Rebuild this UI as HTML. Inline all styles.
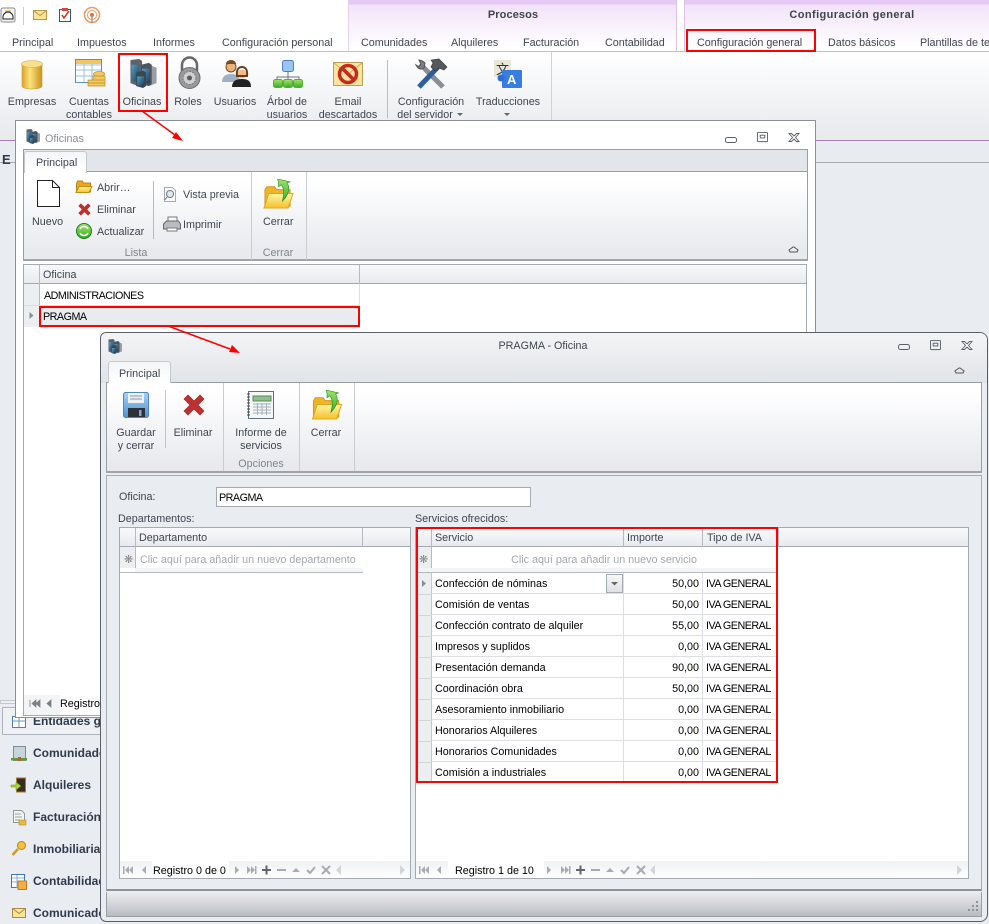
<!DOCTYPE html>
<html lang="es"><head><meta charset="utf-8"><title>Oficinas</title>
<style>
html,body{margin:0;padding:0}
body{width:989px;height:924px;position:relative;overflow:hidden;background:#e9ecf1;font:10.75px/14px "Liberation Sans",sans-serif;color:#3f4550}
div{position:absolute;box-sizing:border-box}
.t{position:absolute;white-space:nowrap;margin-top:1px}
.c{position:absolute;white-space:nowrap;transform:translateX(-50%);margin-top:1px}
.k{color:#000}
.g{color:#a3a7ad}
.n{font-weight:bold;font-size:12px;color:#2f3b4e;left:33px;margin-top:0}
.r{text-align:right;width:60px}
.u{letter-spacing:-.5px}
svg{position:absolute;left:0;top:0;overflow:visible}
.row{left:432px;width:345px;height:21px;border-bottom:1px solid #dcdfe3}
</style></head><body>
<svg width="0" height="0"><defs>
<linearGradient id="gold" x1="0" x2="1" y1="0" y2="0"><stop offset="0" stop-color="#dba528"/><stop offset=".4" stop-color="#fbe27e"/><stop offset="1" stop-color="#c9921a"/></linearGradient>
<linearGradient id="fold" x1="0" x2="0" y1="0" y2="1"><stop offset="0" stop-color="#fff6a8"/><stop offset="1" stop-color="#f7bf28"/></linearGradient>
<linearGradient id="blu" x1="0" x2="0" y1="0" y2="1"><stop offset="0" stop-color="#a6d0f4"/><stop offset="1" stop-color="#4f93d0"/></linearGradient>
<linearGradient id="srv" x1="0" x2="1" y1="0" y2="1"><stop offset="0" stop-color="#58a0c8"/><stop offset="1" stop-color="#1d3a55"/></linearGradient>
<linearGradient id="grn" x1="0" x2="0" y1="0" y2="1"><stop offset="0" stop-color="#9fe465"/><stop offset="1" stop-color="#3aaa2a"/></linearGradient>
<symbol id="server" viewBox="0 0 30 30">
<path d="M20 6l8 3v16l-8 3z" fill="#9a9ea3"/>
<path d="M1 1l9-1 3 2v24l-4 2-8-3z" fill="#5b636b"/><path d="M2 6h8v18l-8-2z" fill="url(#srv)"/>
<path d="M12 6l8-2 3 2v20l-3 2-8-2z" fill="#4d555d"/><path d="M13 10h8v15h-8z" fill="url(#srv)"/>
<path d="M7 14l7-2 3 2v14l-3 2-7-2z" fill="#3d454d"/><path d="M8 18h7v10l-7-1z" fill="url(#srv)"/>
</symbol>
<symbol id="folder" viewBox="0 0 32 32">
<path d="M2 28V11l2-3h8l2 3h14v17z" fill="#f0b428" stroke="#d09a18"/>
<path d="M1 30l5-15h25l-5 15z" fill="url(#fold)" stroke="#e0a518"/>
<path d="M16 3l-1-3 13 3-3 1c3 5 2 12-5 19 2-7 2-13-1-17l-3 2z" fill="url(#grn)" stroke="#1e8a1e" stroke-width=".6"/>
</symbol>
<symbol id="redx" viewBox="0 0 22 22">
<path d="M1 5l4-4 6 6 6-6 4 4-6 6 6 6-4 4-6-6-6 6-4-4 6-6z" fill="#c03030" stroke="#9a2a2a" stroke-width=".7"/>
</symbol>
<symbol id="dash" viewBox="0 0 12 12"><rect x=".5" y="3.500" width="11" height="5" rx="2" fill="none" stroke="#5a6068"/></symbol>
<symbol id="maxb" viewBox="0 0 12 12"><rect x=".5" y=".5" width="11" height="10" rx="1" fill="none" stroke="#5a6068"/><rect x="3.500" y="3.500" width="5" height="3" fill="none" stroke="#5a6068"/></symbol>
<symbol id="closeb" viewBox="0 0 12 12"><path d="M1 1.500h2.500L6 4l2.500-2.500H11L7.500 5.500 11 9.500H8.500L6 7l-2.500 2.500H1l3.500-4z" fill="#fff" stroke="#5a6068" stroke-width=".9"/></symbol>
</defs></svg>

<!-- APP BACKGROUND -->
<div style="left:0;top:0;width:989px;height:52px;background:#fff"></div>
<div style="left:348px;top:0;width:329px;height:52px;background:linear-gradient(#e5c9f2 0,#e5c9f2 4px,#f2e3f8 5px,#fff 48px);border-left:1px solid #e3d2ec;border-right:1px solid #dcc4e8"></div>
<div style="left:684px;top:0;width:305px;height:52px;background:linear-gradient(#e5c9f2 0,#e5c9f2 4px,#f2e3f8 5px,#fff 48px);border-left:1px solid #dcc4e8"></div>
<div style="left:0;top:51px;width:989px;height:1px;background:#cdb8da"></div>
<div style="left:0;top:52px;width:989px;height:88px;background:linear-gradient(#fff,#e7e9ed)"></div>
<div style="left:0;top:52px;width:552px;height:70px;border-right:1px solid #d0d3d8"></div>
<div style="left:387px;top:60px;width:1px;height:58px;background:#b9bcc2"></div>
<div style="left:0;top:140px;width:989px;height:1px;background:#a780ba"></div>
<div style="left:0;top:141px;width:989px;height:22px;background:#e8ebef;border-bottom:1px solid #a6a9ae"></div>

<span class="t" style="left:12px;top:35px">Principal</span>
<span class="t" style="left:77px;top:35px">Impuestos</span>
<span class="t" style="left:153px;top:35px">Informes</span>
<span class="t" style="left:222px;top:35px">Configuración personal</span>
<span class="t" style="left:361px;top:35px">Comunidades</span>
<span class="t" style="left:451px;top:35px">Alquileres</span>
<span class="t" style="left:523px;top:35px">Facturación</span>
<span class="t" style="left:605px;top:35px">Contabilidad</span>
<span class="t" style="left:697px;top:35px">Configuración general</span>
<span class="t" style="left:828px;top:35px">Datos básicos</span>
<span class="t" style="left:920px;top:35px">Plantillas de te</span>
<span class="c" style="left:513px;top:7px;font-weight:bold;font-size:11px;letter-spacing:.1px">Procesos</span>
<span class="c" style="left:852px;top:7px;font-weight:bold;font-size:11px;letter-spacing:.4px">Configuración general</span>

<span class="c" style="left:32px;top:94px">Empresas</span>
<span class="c" style="left:89px;top:94px">Cuentas</span><span class="c" style="left:89px;top:107px">contables</span>
<span class="c" style="left:142px;top:94px">Oficinas</span>
<span class="c" style="left:188px;top:94px">Roles</span>
<span class="c" style="left:235px;top:94px">Usuarios</span>
<span class="c" style="left:287px;top:94px">Árbol de</span><span class="c" style="left:287px;top:107px">usuarios</span>
<span class="c" style="left:348px;top:94px">Email</span><span class="c" style="left:348px;top:107px">descartados</span>
<span class="c" style="left:431px;top:94px">Configuración</span><span class="c" style="left:425px;top:107px">del servidor</span>
<span class="c" style="left:508px;top:94px">Traducciones</span>
<span class="t" style="left:2px;top:152px;font-weight:bold;font-size:13px;color:#2f3b4e">E</span>

<svg width="989" height="924">
<!-- quick access -->
<rect x="1" y="8" width="14" height="14" rx="2" fill="#f4f4f4" stroke="#8a8a8a"/><path d="M3 17a5 5 0 0 1 10 0v2H3z" fill="#fff" stroke="#222"/><path d="M5 11h6" stroke="#c9a030"/>
<path d="M23.500 7v18" stroke="#c9ccd1"/>
<rect x="33.500" y="10.500" width="13" height="9" fill="#fbe49a" stroke="#b9983f"/><path d="M33.500 10.500l6.500 5 6.500-5" fill="none" stroke="#b9983f"/>
<rect x="59.500" y="9.500" width="11" height="12" fill="#fff" stroke="#39527d"/><rect x="62" y="8" width="6" height="3" fill="#c94a3a"/><path d="M62 15l2 3 5-7" fill="none" stroke="#c93a30" stroke-width="1.600"/>
<circle cx="92" cy="15" r="7.500" fill="none" stroke="#ef9a62" stroke-width="1.500"/><circle cx="92" cy="15" r="4.500" fill="none" stroke="#ef9a62"/><circle cx="92" cy="15" r="2" fill="#e0662a"/><path d="M92 15v8" stroke="#9a9a9a" stroke-width="1.500"/>
<!-- Empresas -->
<path d="M22 64v22c0 4 20 4 20 0V64z" fill="url(#gold)" stroke="#c99a30" stroke-width=".6"/><ellipse cx="32" cy="64" rx="10.500" ry="3.500" fill="#f8e08a" stroke="#d0a848" stroke-width=".6"/>
<!-- Cuentas -->
<rect x="75.500" y="59.500" width="26" height="23" fill="#fff" stroke="#5a8fc5"/><rect x="76" y="60" width="25" height="4" fill="#f2c660"/>
<path d="M76 70h25M76 76h25M84 64v18M92 64v18M76 65h25" stroke="#9ac0e4"/>
<g fill="#f3c85c" stroke="#b98f28" stroke-width=".7"><ellipse cx="99" cy="74" rx="5.500" ry="2.500"/><path d="M88 80h17v3H88zM88 83h17v3H88zM93 76h12v4H93z"/></g>
<use href="#server" x="129" y="59" width="30" height="29"/>
<!-- Roles -->
<path d="M182 71v-6a7.500 7.500 0 0 1 15 0v6" fill="none" stroke="#66686c" stroke-width="2.500"/>
<circle cx="189.500" cy="78" r="10.500" fill="#9a9a9c" stroke="#6c6c70"/><circle cx="189.500" cy="78" r="6.500" fill="#cfcfd1" stroke="#77777a" stroke-dasharray="2 1"/><circle cx="189.500" cy="78" r="2.500" fill="#5c5c60"/>
<!-- Usuarios -->
<circle cx="231" cy="67" r="5" fill="#eab37a" stroke="#7a4a20"/><path d="M222 82c0-6 4-8 9-8s9 2 9 8z" fill="#9fb0c6"/>
<path d="M226 64a5 4 0 0 1 10 0z" fill="#7a4a20"/>
<circle cx="242" cy="74" r="4.500" fill="#f0bd8a"/><path d="M237 76c-1-8 3-9 5-9s6 1 5 9z" fill="none" stroke="#6e3c14" stroke-width="2"/><path d="M232 87c0-6 4-8 10-8s9 2 9 8z" fill="#222"/>
<!-- Arbol -->
<rect x="282.500" y="60.500" width="11" height="11" rx="2" fill="#9cc4f2" stroke="#4f7fc0"/>
<path d="M288 72v5M277 80v-3h22v3M288 77v3" fill="none" stroke="#6a7684"/>
<g fill="url(#grn)" stroke="#5aaa34"><rect x="273.500" y="79.500" width="9" height="8" rx="2"/><rect x="283.500" y="79.500" width="9" height="8" rx="2"/><rect x="293.500" y="79.500" width="9" height="8" rx="2"/></g>
<!-- Email -->
<rect x="333.500" y="62.500" width="29" height="23" fill="#fbe59c" stroke="#b9a156"/><path d="M333.500 62.500l14.500 12 14.500-12" fill="none" stroke="#c9ac5a"/>
<circle cx="348" cy="74" r="8.500" fill="none" stroke="#c42a20" stroke-width="3.500"/><path d="M342 68l12 12" stroke="#c42a20" stroke-width="3.500"/>
<!-- Config -->
<path d="M420 64l23 23" stroke="#8a8e94" stroke-width="5"/><path d="M416 65c2 4 5 5 8 3l1-5c-2-2-5-3-6-3l2 4-2 3z" fill="#7c8086" stroke="#555"/>
<path d="M419 87l19-20" stroke="#2f5e9c" stroke-width="5"/><path d="M431 60l8-1 8 8-3 3-5-2-4 3-4-4 2-4z" fill="#55585d" stroke="#333" stroke-width=".6"/>
<!-- Traducciones -->
<rect x="494" y="60" width="17" height="17" fill="#e9e6da"/><text x="496" y="74" font-family="'Noto Sans CJK SC',sans-serif" font-size="13" fill="#333">文</text>
<rect x="502" y="70" width="20" height="18" rx="1" fill="#3a7de0"/><text x="507" y="84" font-family="'Liberation Sans',sans-serif" font-weight="bold" font-size="13" fill="#fff">A</text><circle cx="501" cy="78" r="3.500" fill="#2a6fd8"/>
<path d="M457 113h6l-3 3zM504 113h6l-3 3z" fill="#666"/>
</svg>

<!-- LEFT NAV -->
<div style="left:0;top:700px;width:100px;height:4px;border:1px solid #c5c9cf;background:#eef0f3"></div>
<div style="left:2px;top:707px;width:110px;height:28px;border:1px solid #aeb4bd;background:#eef0f3"></div>
<span class="t n" style="top:714px">Entidades g</span>
<span class="t n" style="top:746px">Comunidades</span>
<span class="t n" style="top:778px">Alquileres</span>
<span class="t n" style="top:810px">Facturación</span>
<span class="t n" style="top:842px">Inmobiliaria</span>
<span class="t n" style="top:874px">Contabilidad</span>
<span class="t n" style="top:906px">Comunicados</span>
<svg width="989" height="924">
<rect x="12.500" y="716.500" width="13" height="11" fill="#fff" stroke="#4f7fc0"/><path d="M13 721h12M19 717v10" stroke="#6a9ad0"/>
<rect x="13.500" y="746.500" width="12" height="14" fill="#c8d4dc" stroke="#7d8d99"/><rect x="11" y="758" width="16" height="2.500" fill="#5d9a3a"/><rect x="18" y="757" width="3" height="4" fill="#a86a2a"/>
<rect x="16.500" y="778" width="9" height="14" fill="#3a2c1c" stroke="#a8793c"/><path d="M11 785h5v-3l5 4-5 4v-3h-5z" fill="#a9d632" stroke="#6a8a14" stroke-width=".5"/>
<path d="M13.500 810.500h8l3 3v9h-11z" fill="#f2f4ee" stroke="#8d9a9a"/><path d="M15 814h6M15 817h7M15 820h5" stroke="#9aa5a5"/><rect x="19" y="820" width="7" height="5" fill="#e8b840" stroke="#a8802a" stroke-width=".5"/>
<circle cx="21.500" cy="845.500" r="4" fill="#f5c33c" stroke="#b8841a"/><path d="M18 849l-5.500 6" stroke="#d9981c" stroke-width="2.500"/>
<rect x="11.500" y="874.500" width="13" height="13" fill="#fff" stroke="#3f78c0"/><path d="M12 878h12M12 882h12M17 875v13" stroke="#8ab0dc"/><rect x="18" y="881" width="8.500" height="8.500" fill="#f2b040" stroke="#c07a20"/>
<rect x="12.500" y="908.500" width="13" height="9" fill="#fbe49a" stroke="#a88d3f"/><path d="M12.500 908.500l6.500 5 6.500-5" fill="none" stroke="#a88d3f"/>
</svg>

<!-- WINDOW 1 -->
<div style="left:15px;top:120px;width:801px;height:598px;background:#fff;border:1px solid #8b9098"></div>
<div style="left:23px;top:149px;width:785px;height:23px;background:#e2e5e9;border:1px solid #9a9ea5;border-bottom:0"></div>
<div style="left:23px;top:171px;width:785px;height:90px;background:linear-gradient(#fff 10%,#e8eaee 90%);border:1px solid #9a9ea5;border-bottom:2px solid #a0a4aa"></div>
<div style="left:24px;top:151px;width:63px;height:22px;background:linear-gradient(#f4f5f7,#fff);border:1px solid #c4c8ce;border-bottom:0;border-radius:3px 3px 0 0"></div>
<div style="left:251px;top:172px;width:1px;height:88px;background:#c9ccd1"></div>
<div style="left:306px;top:172px;width:1px;height:88px;background:#c9ccd1"></div>
<div style="left:153px;top:181px;width:1px;height:58px;background:#b7bac0"></div>
<span class="t" style="left:45px;top:131px;color:#8a8e94">Oficinas</span>
<span class="t" style="left:36px;top:155px">Principal</span>
<span class="t" style="left:32px;top:214px">Nuevo</span>
<span class="t" style="left:97px;top:180px">Abrir…</span>
<span class="t" style="left:97px;top:202px">Eliminar</span>
<span class="t" style="left:97px;top:224px">Actualizar</span>
<span class="t" style="left:183px;top:187px">Vista previa</span>
<span class="t" style="left:183px;top:217px">Imprimir</span>
<span class="t" style="left:263px;top:214px">Cerrar</span>
<span class="c g" style="left:136px;top:245px;color:#7f868f">Lista</span>
<span class="c g" style="left:278px;top:245px;color:#7f868f">Cerrar</span>
<!-- grid 1 -->
<div style="left:23px;top:264px;width:784px;height:452px;background:#fff;border:1px solid #a4a9b2"></div>
<div style="left:24px;top:265px;width:782px;height:19px;background:linear-gradient(#f8f9fa,#e8eaee);border-bottom:1px solid #a4a9b2"></div>
<div style="left:39px;top:265px;width:1px;height:62px;background:#b5b9c0"></div>
<div style="left:359px;top:265px;width:1px;height:19px;background:#b5b9c0"></div>
<div style="left:24px;top:284px;width:15px;height:43px;background:#eceef1"></div>
<div style="left:24px;top:305px;width:336px;height:1px;background:#d9dce0"></div>
<div style="left:40px;top:306px;width:320px;height:21px;background:#e9ebee"></div>
<div style="left:359px;top:284px;width:1px;height:43px;background:#dcdfe3"></div>
<span class="t" style="left:43px;top:267px">Oficina</span>
<span class="t k u" style="left:44px;top:288px">ADMINISTRACIONES</span>
<span class="t k u" style="left:43px;top:309px">PRAGMA</span>
<div style="left:24px;top:695px;width:36px;height:20px;background:#f3f4f6"></div>
<span class="t k" style="left:60px;top:696px">Registro</span>
<svg width="989" height="924">
<use href="#server" x="26" y="129" width="15" height="15"/>
<use href="#dash" x="725" y="134" width="12" height="12"/><use href="#maxb" x="757" y="132" width="11" height="11"/><use href="#closeb" x="788" y="132" width="12" height="12"/>
<path d="M790 252l-1-2 4-3 1 0 4 3-1 2h-7z" fill="none" stroke="#555"/>
<path d="M37.500 180.500h15l7 7v19h-22z" fill="#fff" stroke="#222"/><path d="M52.500 180.500v7h7" fill="none" stroke="#222"/>
<path d="M76.500 192v-8l1-3h5l1 2h7v9z" fill="#e8a91c" stroke="#b9861a"/><path d="M76 192.500l3-6h13l-3 6z" fill="url(#fold)" stroke="#c88c10"/>
<use href="#redx" x="78" y="203" width="13" height="13"/>
<circle cx="84" cy="231" r="7.500" fill="url(#grn)" stroke="#1d7d1d"/><path d="M80 229a4.500 4.500 0 0 1 8 0M88 233a4.500 4.500 0 0 1-8 0" fill="none" stroke="#fff" stroke-width="1.500"/>
<path d="M164.500 187.500h8l3 3v11h-11z" fill="#fafafa" stroke="#a8acb2"/><circle cx="170" cy="194" r="3.500" fill="#dfe9f2" stroke="#6a7a8a"/><path d="M167 197l-2.500 3" stroke="#6a7a8a"/>
<path d="M168 217h9v5h-9z" fill="#f8f8f8" stroke="#777"/><path d="M163.500 224l3-3h12l2 3v5h-17z" fill="#b8bcc2" stroke="#666"/><path d="M167 228h10v3h-10z" fill="#fff" stroke="#777"/>
<use href="#folder" x="263" y="179" width="31" height="31"/>
<path d="M29.500 312v7l4-3.500z" fill="#8a8e94"/>
<path d="M30 700v7M36 700v7l-4-3.500zM40 700v7l-4-3.500zM51 700v7l-4-3.500z" fill="#7c8086" stroke="#7c8086" stroke-width=".8"/>
</svg>

<!-- WINDOW 2 -->
<div style="left:100px;top:332px;width:888px;height:590px;background:#e9ecf1;border:1px solid #5c6066;border-radius:6px 8px 8px 6px;overflow:hidden">
 <div style="left:0;top:0;width:886px;height:50px;background:linear-gradient(#f3f4f6,#e1e4e8)"></div>
</div>
<div style="left:106px;top:382px;width:876px;height:90px;background:linear-gradient(#fff 10%,#e8eaee 90%);border-top:1px solid #9a9ea5;border-left:1px solid #9a9ea5;border-right:1px solid #9a9ea5"></div>
<div style="left:108px;top:361px;width:63px;height:22px;background:linear-gradient(#f4f5f7,#fff);border:1px solid #c4c8ce;border-bottom:0;border-radius:3px 3px 0 0"></div>
<div style="left:106px;top:471px;width:876px;height:2px;background:#a0a4aa"></div>
<div style="left:106px;top:475px;width:876px;height:416px;border:1px solid #a8acb3;border-bottom:2px solid #8f9399;background:#e9ecf1"></div>
<div style="left:223px;top:383px;width:1px;height:88px;background:#c9ccd1"></div>
<div style="left:299px;top:383px;width:1px;height:88px;background:#c9ccd1"></div>
<div style="left:354px;top:383px;width:1px;height:88px;background:#c9ccd1"></div>
<div style="left:165px;top:390px;width:1px;height:58px;background:#c1c4ca"></div>
<div style="left:106px;top:892px;width:876px;height:25px;background:linear-gradient(#eceef1,#b9bcc1);border:1px solid #9a9ea5;border-top:0"></div>

<span class="c" style="left:543px;top:338px">PRAGMA - Oficina</span>
<span class="t" style="left:119px;top:366px">Principal</span>
<span class="c" style="left:136px;top:425px">Guardar</span><span class="c" style="left:136px;top:438px">y cerrar</span>
<span class="c" style="left:193px;top:425px">Eliminar</span>
<span class="c" style="left:261px;top:425px">Informe de</span><span class="c" style="left:261px;top:438px">servicios</span>
<span class="c" style="left:326px;top:425px">Cerrar</span>
<span class="c" style="left:261px;top:456px;color:#7f868f">Opciones</span>

<span class="t" style="left:119px;top:489px">Oficina:</span>
<div style="left:216px;top:487px;width:315px;height:20px;background:#fff;border:1px solid #a4a9b2"></div>
<span class="t k u" style="left:219px;top:490px">PRAGMA</span>
<span class="t" style="left:118px;top:511px">Departamentos:</span>
<span class="t" style="left:415px;top:511px">Servicios ofrecidos:</span>

<!-- left grid -->
<div style="left:119px;top:527px;width:292px;height:352px;background:#fff;border:1px solid #a4a9b2"></div>
<div style="left:120px;top:528px;width:290px;height:19px;background:linear-gradient(#f8f9fa,#e8eaee);border-bottom:1px solid #a4a9b2"></div>
<div style="left:135px;top:528px;width:1px;height:40px;background:#b5b9c0"></div>
<div style="left:362px;top:528px;width:1px;height:19px;background:#b5b9c0"></div>
<div style="left:120px;top:547px;width:15px;height:21px;background:#eceef1"></div>
<div style="left:120px;top:572px;width:243px;height:1px;background:#b5b9c0"></div>
<div style="left:135px;top:568px;width:228px;height:4px;background:#f3f4f6"></div>
<span class="t" style="left:139px;top:530px">Departamento</span>
<span class="t g" style="left:140px;top:552px">Clic aquí para añadir un nuevo departamento</span>
<div style="left:120px;top:861px;width:290px;height:17px;background:linear-gradient(#eef0f2,#fff)"></div>
<div style="left:152px;top:861px;width:77px;height:17px;background:#fff"></div>
<span class="t k" style="left:153px;top:863px">Registro 0 de 0</span>

<!-- right grid -->
<div style="left:415px;top:527px;width:554px;height:352px;background:#fff;border:1px solid #a4a9b2"></div>
<div style="left:416px;top:528px;width:552px;height:19px;background:linear-gradient(#f8f9fa,#e8eaee);border-bottom:1px solid #a4a9b2"></div>
<div style="left:431px;top:528px;width:1px;height:20px;background:#b5b9c0"></div>
<div style="left:623px;top:528px;width:1px;height:19px;background:#b5b9c0"></div>
<div style="left:702px;top:528px;width:1px;height:19px;background:#b5b9c0"></div>
<div style="left:778px;top:528px;width:1px;height:19px;background:#b5b9c0"></div>
<div style="left:416px;top:547px;width:16px;height:21px;background:#eceef1;border-right:1px solid #b5b9c0"></div>
<div style="left:416px;top:568px;width:362px;height:4px;background:#f3f4f6"></div>
<div style="left:416px;top:572px;width:362px;height:1px;background:#b5b9c0"></div>
<div style="left:416px;top:573px;width:16px;height:210px;background:#eceef1;border-right:1px solid #c5c9cf"></div>
<span class="t" style="left:435px;top:530px">Servicio</span>
<span class="t" style="left:627px;top:530px">Importe</span>
<span class="t" style="left:707px;top:530px">Tipo de IVA</span>
<span class="c g" style="left:604px;top:552px">Clic aquí para añadir un nuevo servicio</span>

<div class="row" style="top:573px"></div><div class="row" style="top:594px"></div><div class="row" style="top:615px"></div><div class="row" style="top:636px"></div><div class="row" style="top:657px"></div><div class="row" style="top:678px"></div><div class="row" style="top:699px"></div><div class="row" style="top:720px"></div><div class="row" style="top:741px"></div>
<div style="left:416px;top:594px;width:16px;height:1px;background:#d3d6db;box-shadow:0 21px #d3d6db,0 42px #d3d6db,0 63px #d3d6db,0 84px #d3d6db,0 105px #d3d6db,0 126px #d3d6db,0 147px #d3d6db,0 168px #d3d6db"></div>
<div style="left:623px;top:573px;width:1px;height:210px;background:#dcdfe3"></div>
<div style="left:702px;top:573px;width:1px;height:210px;background:#dcdfe3"></div>
<div style="left:606px;top:574px;width:17px;height:19px;background:linear-gradient(#f6f7f8,#dfe2e6);border:1px solid #a4a9b2"></div>

<span class="t k" style="left:435px;top:576px">Confección de nóminas</span><span class="t k r" style="left:639px;top:576px">50,00</span><span class="t k u" style="left:706px;top:576px">IVA GENERAL</span>
<span class="t k" style="left:435px;top:597px">Comisión de ventas</span><span class="t k r" style="left:639px;top:597px">50,00</span><span class="t k u" style="left:706px;top:597px">IVA GENERAL</span>
<span class="t k" style="left:435px;top:618px">Confección contrato de alquiler</span><span class="t k r" style="left:639px;top:618px">55,00</span><span class="t k u" style="left:706px;top:618px">IVA GENERAL</span>
<span class="t k" style="left:435px;top:639px">Impresos y suplidos</span><span class="t k r" style="left:639px;top:639px">0,00</span><span class="t k u" style="left:706px;top:639px">IVA GENERAL</span>
<span class="t k" style="left:435px;top:660px">Presentación demanda</span><span class="t k r" style="left:639px;top:660px">90,00</span><span class="t k u" style="left:706px;top:660px">IVA GENERAL</span>
<span class="t k" style="left:435px;top:681px">Coordinación obra</span><span class="t k r" style="left:639px;top:681px">50,00</span><span class="t k u" style="left:706px;top:681px">IVA GENERAL</span>
<span class="t k" style="left:435px;top:702px">Asesoramiento inmobiliario</span><span class="t k r" style="left:639px;top:702px">0,00</span><span class="t k u" style="left:706px;top:702px">IVA GENERAL</span>
<span class="t k" style="left:435px;top:723px">Honorarios Alquileres</span><span class="t k r" style="left:639px;top:723px">0,00</span><span class="t k u" style="left:706px;top:723px">IVA GENERAL</span>
<span class="t k" style="left:435px;top:744px">Honorarios Comunidades</span><span class="t k r" style="left:639px;top:744px">0,00</span><span class="t k u" style="left:706px;top:744px">IVA GENERAL</span>
<span class="t k" style="left:435px;top:765px">Comisión a industriales</span><span class="t k r" style="left:639px;top:765px">0,00</span><span class="t k u" style="left:706px;top:765px">IVA GENERAL</span>

<div style="left:416px;top:861px;width:552px;height:17px;background:linear-gradient(#eef0f2,#fff)"></div>
<div style="left:448px;top:861px;width:96px;height:17px;background:#fff"></div>
<span class="t k" style="left:455px;top:863px">Registro 1 de 10</span>

<svg width="989" height="924">
<use href="#server" x="108" y="339" width="15" height="15"/>
<use href="#dash" x="898" y="341" width="12" height="12"/><use href="#maxb" x="930" y="340" width="11" height="11"/><use href="#closeb" x="961" y="340" width="12" height="12"/>
<path d="M956 373l-1-2 4-3 1 0 4 3-1 2h-7z" fill="none" stroke="#555"/>
<!-- save -->
<rect x="123.500" y="392.500" width="25" height="25" rx="2" fill="url(#blu)" stroke="#4f86c0"/><rect x="128" y="393" width="16" height="10" fill="#eef2f6"/><path d="M130 396h12M130 399h12" stroke="#8a94a0"/><rect x="128" y="408" width="17" height="9" fill="#2d3238"/><rect x="139" y="410" width="2.500" height="6" fill="#7fa8cc"/>
<use href="#redx" x="183" y="394" width="22" height="22"/>
<!-- informe -->
<rect x="248.500" y="391.500" width="25" height="27" fill="#f5f7f8" stroke="#60707e"/><rect x="253" y="396" width="18" height="5" fill="#8fbf8a" stroke="#5a8a5a"/>
<path d="M253 404h18M253 407h18M253 410h18M253 413h18M257.500 403v12M262 403v12M266.500 403v12" stroke="#a8b0ba"/>
<path d="M247 394h3M247 397h3M247 400h3M247 403h3M247 406h3M247 409h3M247 412h3M247 415h3" stroke="#444"/>
<use href="#folder" x="311" y="390" width="32" height="31"/>
<!-- grid markers -->
<text x="124" y="563" font-size="11" fill="#888" font-family="'DejaVu Sans',sans-serif">❋</text>
<text x="419" y="563" font-size="11" fill="#888" font-family="'DejaVu Sans',sans-serif">❋</text>
<path d="M422 580v7l4-3.500z" fill="#8a8e94"/>
<path d="M611 582h7l-3.500 3.500z" fill="#666"/>
<!-- nav -->
<g fill="#a7abb2">
<path d="M123 866h1.500v8H123zM129 866v8l-4-4zM133 866v8l-4-4zM146 866v8l-4-4z"/>
<path d="M235 866v8l4-4zM247 866v8l4-4zM251 866v8l4-4zM255 866h1.500v8H255z"/>
<path d="M341 865v10l-5-5z" fill="#d2d5da"/><path d="M400 865v10l5-5z" fill="#d2d5da"/>
<path d="M419 866h1.500v8H419zM425 866v8l-4-4zM429 866v8l-4-4zM441 866v8l-4-4z"/>
<path d="M547 866v8l4-4zM561 866v8l4-4zM565 866v8l4-4zM569 866h1.500v8H569z"/>
<path d="M655 865v10l-5-5z" fill="#d2d5da"/><path d="M957 865v10l5-5z" fill="#d2d5da"/>
</g>
<g fill="none">
<path d="M262 870h9M266.500 865.500v9" stroke="#5f656d" stroke-width="2"/><path d="M277 870h9" stroke="#a7abb2" stroke-width="2"/><path d="M292 872l4-4 4 4z" fill="#a7abb2"/><path d="M307 870l3 3 5-6" stroke="#a7abb2" stroke-width="2"/><path d="M322 866l8 8M330 866l-8 8" stroke="#a7abb2" stroke-width="2"/>
<path d="M576 870h9M580.500 865.500v9" stroke="#5f656d" stroke-width="2"/><path d="M591 870h9" stroke="#a7abb2" stroke-width="2"/><path d="M606 872l4-4 4 4z" fill="#a7abb2"/><path d="M621 870l3 3 5-6" stroke="#a7abb2" stroke-width="2"/><path d="M637 866l8 8M645 866l-8 8" stroke="#a7abb2" stroke-width="2"/>
</g>
<!-- grip -->
<g fill="#8f9399"><rect x="976" y="901" width="2" height="2"/><rect x="972" y="905" width="2" height="2"/><rect x="976" y="905" width="2" height="2"/><rect x="968" y="909" width="2" height="2"/><rect x="972" y="909" width="2" height="2"/><rect x="976" y="909" width="2" height="2"/></g>
<!-- red annotation -->
<g fill="none" stroke="#f00" stroke-width="2">
<rect x="119" y="54" width="48" height="57"/>
<rect x="687" y="30" width="128" height="21"/>
<rect x="40" y="307" width="319" height="19"/>
<rect x="417" y="528" width="360" height="254"/>
</g>
<path d="M142 111l33 24" stroke="#f00" stroke-width="1.500"/><path d="M183 141l-11-3 4-6z" fill="#f00"/>
<path d="M168 326l62 23" stroke="#f00" stroke-width="1.500"/><path d="M240 353l-11-1 3-7z" fill="#f00"/>
</svg>
</body></html>
